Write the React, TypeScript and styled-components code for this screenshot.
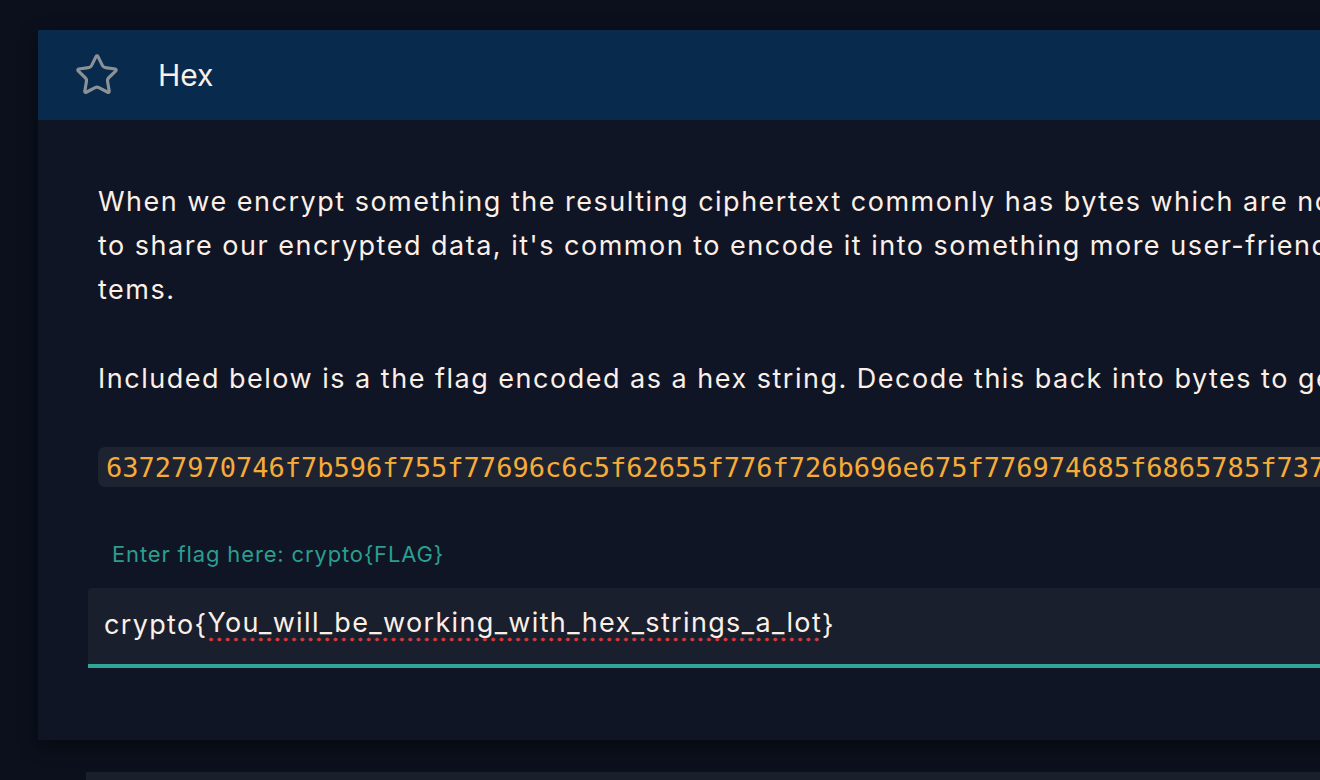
import React from "react";
import styled, { createGlobalStyle } from "styled-components";
import { Star } from "lucide-react";

const GlobalStyle = createGlobalStyle`
  html, body {
    margin: 0;
    padding: 0;
    background: #0b101c;
    overflow: hidden;
    width: 1320px;
    height: 780px;
  }
  * { box-sizing: border-box; }
`;

const Page = styled.div`
  padding: 30px 0 0 38px;
  display: flex;
  flex-direction: column;
  gap: 32px;
  font-family: Inter, "Noto Sans", sans-serif;
`;

const Card = styled.section`
  width: 1500px;
  background: #0f1525;
  box-shadow: 0 6px 18px rgba(0, 0, 0, 0.45);
`;

const Header = styled.header`
  height: 90px;
  background: #082a4c;
  display: flex;
  align-items: center;
  padding-left: 36px;
  gap: 38px;
`;

const Title = styled.h2`
  margin: 0;
  font-size: 30px;
  font-weight: 400;
  color: #fbefe6;
`;

const Body = styled.div`
  padding: 60px 0 72px 60px;
  display: flex;
  flex-direction: column;
`;

const Paragraph = styled.p`
  margin: 0 0 45px;
  font-size: 27px;
  line-height: 44px;
  letter-spacing: 1.5px;
  color: #fbefe6;
  white-space: nowrap;
`;

const CodeBox = styled.div`
  height: 40px;
  display: flex;
  align-items: center;
  padding-left: 8px;
  border-radius: 7px;
  background: #1e2331;
  margin-top: 1px;
`;

const Code = styled.code`
  font-family: "DejaVu Sans Mono", monospace;
  font-size: 27px;
  color: #f6ac38;
  white-space: nowrap;
`;

const Form = styled.form`
  margin: 52px 0 0 -10px;
  display: flex;
  flex-direction: column;
`;

const Label = styled.label`
  margin-left: 24px;
  font-size: 22px;
  line-height: 30px;
  letter-spacing: 0.85px;
  color: #2b9e8f;
`;

const Field = styled.div`
  margin-top: 19px;
  height: 80px;
  display: flex;
  align-items: center;
  padding: 0 0 4px 16px;
  background: #1a1f2e;
  border-bottom: 4px solid #2ea596;
  border-radius: 4px 4px 0 0;
  font-size: 27px;
  letter-spacing: 1.35px;
  color: #fbefe6;
  white-space: nowrap;
`;

const Misspelled = styled.span`
  background-image: radial-gradient(circle, #d6393a 1.7px, transparent 2.2px);
  background-size: 8.3px 5px;
  background-repeat: repeat-x;
  background-position: 0 100%;
  padding-bottom: 3px;
`;

const NextCard = styled.div`
  margin-left: 48px;
  width: 1500px;
  height: 60px;
  background: #1a1f2c;
`;

export default function App() {
  return (
    <>
      <GlobalStyle />
      <Page>
        <Card>
          <Header>
            <Star size={46} strokeWidth={1.65} color="#8c9097" />
            <Title>Hex</Title>
          </Header>
          <Body>
            <Paragraph>
              When we encrypt something the resulting ciphertext commonly has bytes which are not printable ASCII characters. If we want
              <br />
              to share our encrypted data, it's common to encode it into something more user-friendly and portable across different sys-
              <br />
              tems.
            </Paragraph>
            <Paragraph>
              Included below is a the flag encoded as a hex string. Decode this back into bytes to get the flag.
            </Paragraph>
            <CodeBox>
              <Code>63727970746f7b596f755f77696c6c5f62655f776f726b696e675f776974685f6865785f737472696e67735f615f6c6f747d</Code>
            </CodeBox>
            <Form onSubmit={(e) => e.preventDefault()}>
              <Label>Enter flag here: crypto{"{FLAG}"}</Label>
              <Field>
                crypto{"{"}
                <Misspelled>You_will_be_working_with_hex_strings_a_lot</Misspelled>
                {"}"}
              </Field>
            </Form>
          </Body>
        </Card>
        <NextCard />
      </Page>
    </>
  );
}
